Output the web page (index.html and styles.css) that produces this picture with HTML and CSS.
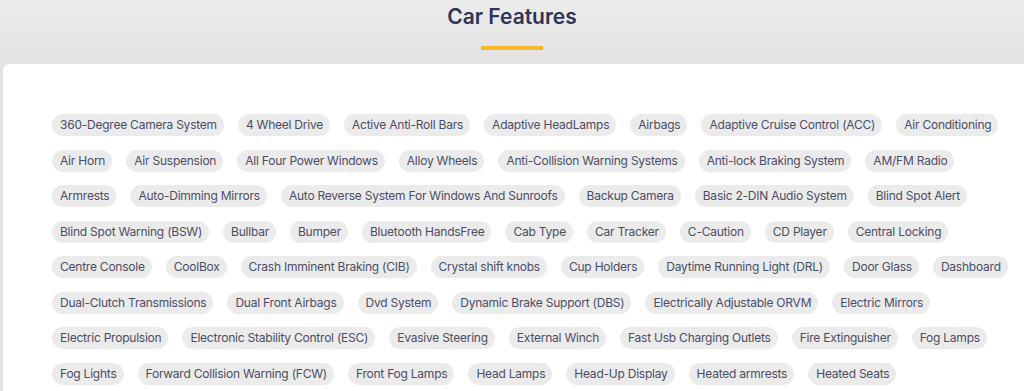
FILE: index.html
```html
<!DOCTYPE html>
<html lang="en">

<head>
    <meta charset="UTF-8">
    <meta name="viewport" content="width=device-width, initial-scale=1.0">
    <title>Car Features</title>
    <link rel="stylesheet" href="styles.css">
</head>

<body>
    <div class="section-head">
        <h2>Car Features</h2>
        <span class="underline"></span>
    </div>

    <div class="card">
        <ul class="feature-list">
            <li>360-Degree Camera System</li>
            <li>4 Wheel Drive</li>
            <li>Active Anti-Roll Bars</li>
            <li>Adaptive HeadLamps</li>
            <li>Airbags</li>
            <li>Adaptive Cruise Control (ACC)</li>
            <li>Air Conditioning</li>
            <li>Air Horn</li>
            <li>Air Suspension</li>
            <li>All Four Power Windows</li>
            <li>Alloy Wheels</li>
            <li>Anti-Collision Warning Systems</li>
            <li>Anti-lock Braking System</li>
            <li>AM/FM Radio</li>
            <li>Armrests</li>
            <li>Auto-Dimming Mirrors</li>
            <li>Auto Reverse System For Windows And Sunroofs</li>
            <li>Backup Camera</li>
            <li>Basic 2-DIN Audio System</li>
            <li>Blind Spot Alert</li>
            <li>Blind Spot Warning (BSW)</li>
            <li>Bullbar</li>
            <li>Bumper</li>
            <li>Bluetooth HandsFree</li>
            <li>Cab Type</li>
            <li>Car Tracker</li>
            <li>C-Caution</li>
            <li>CD Player</li>
            <li>Central Locking</li>
            <li>Centre Console</li>
            <li>CoolBox</li>
            <li>Crash Imminent Braking (CIB)</li>
            <li>Crystal shift knobs</li>
            <li>Cup Holders</li>
            <li>Daytime Running Light (DRL)</li>
            <li>Door Glass</li>
            <li>Dashboard</li>
            <li>Dual-Clutch Transmissions</li>
            <li>Dual Front Airbags</li>
            <li>Dvd System</li>
            <li>Dynamic Brake Support (DBS)</li>
            <li>Electrically Adjustable ORVM</li>
            <li>Electric Mirrors</li>
            <li>Electric Propulsion</li>
            <li>Electronic Stability Control (ESC)</li>
            <li>Evasive Steering</li>
            <li>External Winch</li>
            <li>Fast Usb Charging Outlets</li>
            <li>Fire Extinguisher</li>
            <li>Fog Lamps</li>
            <li>Fog Lights</li>
            <li>Forward Collision Warning (FCW)</li>
            <li>Front Fog Lamps</li>
            <li>Head Lamps</li>
            <li>Head-Up Display</li>
            <li>Heated armrests</li>
            <li>Heated Seats</li>
            <li>Hill Descent Control</li>
            <li>Hill Start Assist</li>
            <li>Keyless Entry</li>
            <li>Lane Departure Warning</li>
        </ul>
    </div>
</body>

</html>
```

FILE: styles.css
```css
html,
body {
    overflow: hidden;
}

body {
    margin: 0;
    font-family: Inter, "Noto Sans", Arial, sans-serif;
    background: linear-gradient(#ececec, #e3e3e3 60px);
    min-height: 391px;
}

.section-head {
    display: flex;
    flex-direction: column;
    align-items: center;
    padding: 4px 0 14px;
}

.section-head h2 {
    margin: 0;
    font-size: 21px;
    line-height: 26px;
    font-weight: 600;
    color: #2f3457;
}

.underline {
    display: block;
    width: 62px;
    height: 4px;
    margin-top: 16px;
    background-color: #fbb726;
}

.card {
    background-color: #fff;
    margin-left: 3px;
    width: 1100px;
    padding: 50px 0 40px 49px;
    border-radius: 6px 0 0 0;
}

.feature-list {
    list-style: none;
    margin: 0;
    padding: 0;
    width: 960px;
    display: flex;
    flex-wrap: wrap;
    column-gap: 14px;
    row-gap: 13.5px;
}

.feature-list li {
    height: 22px;
    line-height: 22px;
    padding: 0 7px 0 8px;
    font-size: 12px;
    letter-spacing: -0.23px;
    color: #4b4d66;
    background-color: #ebebeb;
    border-radius: 11px;
    white-space: nowrap;
}
```
